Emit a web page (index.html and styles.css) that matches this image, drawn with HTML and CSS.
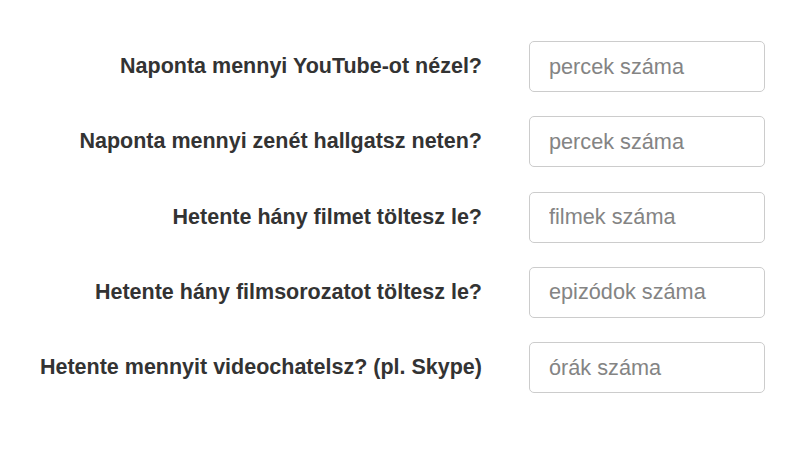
FILE: index.html
```html
<!DOCTYPE html>
<html lang="hu">

<head>
  <meta charset="UTF-8">
  <meta name="viewport" content="width=device-width, initial-scale=1.0">
  <title>Kérdőív</title>
  <link rel="stylesheet" href="styles.css">
</head>

<body>
  <form class="survey">
    <label class="survey-label" for="youtube">Naponta mennyi YouTube-ot nézel?</label>
    <input class="survey-input" id="youtube" type="text" placeholder="percek száma">

    <label class="survey-label" for="music">Naponta mennyi zenét hallgatsz neten?</label>
    <input class="survey-input" id="music" type="text" placeholder="percek száma">

    <label class="survey-label" for="movies">Hetente hány filmet töltesz le?</label>
    <input class="survey-input" id="movies" type="text" placeholder="filmek száma">

    <label class="survey-label" for="series">Hetente hány filmsorozatot töltesz le?</label>
    <input class="survey-input" id="series" type="text" placeholder="epizódok száma">

    <label class="survey-label" for="videochat">Hetente mennyit videochatelsz? (pl. Skype)</label>
    <input class="survey-input" id="videochat" type="text" placeholder="órák száma">
  </form>
</body>

</html>
```

FILE: styles.css
```css
body {
  margin: 0;
  background-color: #fff;
  font-family: "Liberation Sans", Arial, sans-serif;
}

.survey {
  display: grid;
  grid-template-columns: 482px 236px;
  grid-auto-rows: 51px;
  column-gap: 47px;
  row-gap: 24.3px;
  padding-top: 41px;
}

.survey-label {
  display: flex;
  align-items: center;
  justify-content: flex-end;
  font-size: 21.5px;
  font-weight: bold;
  color: #333;
  white-space: nowrap;
}

.survey-input {
  box-sizing: border-box;
  width: 100%;
  height: 100%;
  padding: 0 19px;
  font-family: inherit;
  font-size: 21.7px;
  color: #555;
  background-color: #fff;
  border: 1px solid #ccc;
  border-radius: 5px;
  outline: none;
}

.survey-input::placeholder {
  color: #848484;
}
```
